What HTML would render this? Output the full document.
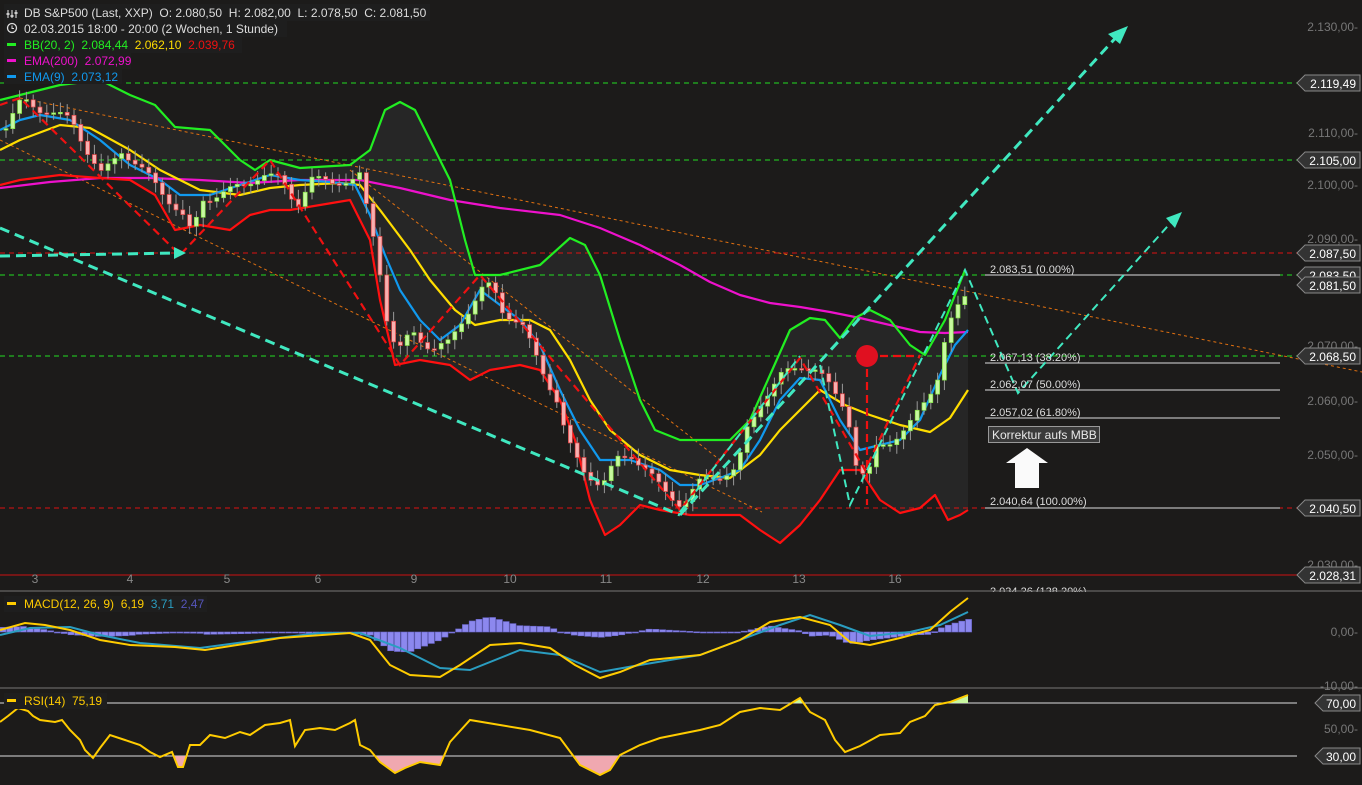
<!DOCTYPE html>
<html><head><meta charset="utf-8"><style>
body{margin:0;background:#1c1b1a;width:1362px;height:785px;overflow:hidden;font-family:"Liberation Sans",sans-serif}
svg{position:absolute;left:0;top:0}
.t{font-family:"Liberation Sans",sans-serif;font-size:12px}
text{white-space:pre}
</style></head><body>
<svg id="s" width="1362" height="785" xmlns="http://www.w3.org/2000/svg">
<rect width="1362" height="785" fill="#1c1b1a"/>
<polygon id="band" fill="#262626" points=""/>
<g stroke-width="1" fill="none">
<line x1="0" y1="83" x2="1297" y2="83" stroke="#22dd22" stroke-dasharray="5,4"/>
<line x1="0" y1="160" x2="1297" y2="160" stroke="#22dd22" stroke-dasharray="5,4"/>
<line x1="0" y1="253" x2="1297" y2="253" stroke="#dd1111" stroke-dasharray="5,4"/>
<line x1="0" y1="275" x2="1297" y2="275" stroke="#22dd22" stroke-dasharray="5,4"/>
<line x1="0" y1="356" x2="1297" y2="356" stroke="#22dd22" stroke-dasharray="5,4"/>
<line x1="0" y1="508" x2="1297" y2="508" stroke="#dd1111" stroke-dasharray="5,4"/>
<line x1="0" y1="575" x2="1297" y2="575" stroke="#cc1111"/>
<g stroke="#ddd"><line x1="985" y1="275" x2="1280" y2="275"/><line x1="985" y1="363" x2="1280" y2="363"/><line x1="985" y1="390" x2="1280" y2="390"/><line x1="985" y1="418" x2="1280" y2="418"/><line x1="985" y1="508" x2="1280" y2="508"/></g>
<g stroke="#e07010" stroke-dasharray="3,3">
<line x1="20" y1="98" x2="1362" y2="372"/>
<line x1="0" y1="140" x2="762" y2="512"/>
<line x1="350" y1="170" x2="720" y2="460"/>
</g>
</g>
<g id="lines" fill="none" stroke-width="2.2" stroke-linejoin="round"></g>
<g id="candles"></g>
<g fill="none" stroke="#ee1111" stroke-width="2.2" stroke-dasharray="8,5">
<polyline points="0,105 20,98 180,255 270,160 400,365 480,275 680,510 800,358 865,470 920,355"/>
<line x1="867" y1="356" x2="867" y2="505"/>
<line x1="867" y1="356" x2="920" y2="356"/>
</g>
<circle cx="867" cy="356" r="11" fill="#e01020"/>
<g fill="none" stroke="#40e8c0" stroke-width="3" stroke-dasharray="10,6">
<line x1="0" y1="228" x2="680" y2="515"/>
<line x1="680" y1="515" x2="1120" y2="33"/>
<line x1="0" y1="256" x2="178" y2="253"/>
</g>
<g fill="none" stroke="#40e8c0" stroke-width="2" stroke-dasharray="8,5">
<line x1="680" y1="512" x2="800" y2="356"/>
<polyline points="820,365 850,505 965,270 1018,393 1175,218"/>
</g>
<g fill="#40e8c0"><polygon points="1128,26 1108,34 1120,44"/><polygon points="1182,212 1166,218 1175,228"/><polygon points="186,253 174,247 174,259"/></g>
<polygon points="1027,448 1048,463 1039,463 1039,488 1015,488 1015,463 1006,463" fill="#fafafa"/>
<rect x="988.5" y="426.5" width="111" height="16" fill="#3a3a3a" stroke="#999"/>
<text x="992" y="439" class="t" fill="#e8e8e8">Korrektur aufs MBB</text>
<g class="t" fill="#ddd">
<text x="990" y="273" font-size="11">2.083,51 (0.00%)</text>
<text x="990" y="361" font-size="11">2.067,13 (38.20%)</text>
<text x="990" y="388" font-size="11">2.062,07 (50.00%)</text>
<text x="990" y="416" font-size="11">2.057,02 (61.80%)</text>
<text x="990" y="505" font-size="11">2.040,64 (100.00%)</text>
<text x="990" y="595" font-size="11">2.034,26 (138.20%)</text>
</g>
<rect x="0" y="592" width="1297" height="8" fill="#1c1b1a"/>
<line x1="0" y1="591" x2="1362" y2="591" stroke="#777"/>
<line x1="0" y1="688" x2="1362" y2="688" stroke="#777"/>
<g class="t" fill="#777" font-size="12" text-anchor="end">
<text x="1358" y="31">2.130,00-</text><text x="1358" y="137">2.110,00-</text><text x="1358" y="189">2.100,00-</text><text x="1358" y="243">2.090,00-</text><text x="1358" y="350">2.070,00-</text><text x="1358" y="405">2.060,00-</text><text x="1358" y="459">2.050,00-</text><text x="1358" y="569">2.030,00-</text>
<text x="1358" y="636">0,00-</text><text x="1358" y="690">-10,00-</text><text x="1358" y="733">50,00-</text>
</g>
<g id="lbl"></g>
<g class="t" fill="#888" font-size="12" text-anchor="middle">
<text x="35" y="583">3</text><text x="130" y="583">4</text><text x="227" y="583">5</text><text x="318" y="583">6</text><text x="414" y="583">9</text><text x="510" y="583">10</text><text x="606" y="583">11</text><text x="703" y="583">12</text><text x="799" y="583">13</text><text x="895" y="583">16</text>
</g>
<g id="hist"></g>
<g fill="none" stroke-width="2">
<polyline stroke="#2a9dc0" points="0,635 30,628 70,627 100,635 140,643 200,648 260,640 320,633 360,633 400,648 440,668 470,670 520,650 560,655 600,672 640,665 700,655 740,640 780,625 810,615 840,625 870,636 910,632 940,625 968,612"/>
<polyline stroke="#ffcc00" points="0,630 25,623 45,625 70,630 100,640 130,645 175,647 205,650 250,643 280,638 350,633 370,640 390,665 410,675 440,677 460,665 490,645 520,643 550,648 575,665 600,678 620,672 650,660 700,655 740,640 770,622 800,617 830,625 850,642 870,645 900,638 930,630 950,612 968,598"/>
</g>
<line x1="0" y1="703" x2="1297" y2="703" stroke="#ddd"/>
<line x1="0" y1="756" x2="1297" y2="756" stroke="#ddd"/>
<polygon id="rsifill" fill="#f0a8b0"/>
<g id="rsig"></g>
<polyline id="rsi" fill="none" stroke="#ffcc00" stroke-width="2"/>
<g fill="#1e1e1e">
<rect x="4" y="4" width="426" height="17"/><rect x="4" y="21" width="283" height="16"/><rect x="4" y="37" width="238" height="16"/><rect x="4" y="53" width="127" height="16"/><rect x="4" y="69" width="118" height="15"/>
<rect x="4" y="596" width="203" height="16"/><rect x="4" y="693" width="103" height="16"/>
</g>
<g class="t" font-size="12">
<g stroke="#ccc" stroke-width="1.2"><line x1="8" y1="10" x2="8" y2="18"/><line x1="12" y1="10" x2="12" y2="18"/><line x1="16" y1="10" x2="16" y2="18"/></g>
<g fill="#ccc"><rect x="6.5" y="13" width="3" height="2"/><rect x="10.5" y="15" width="3" height="2"/><rect x="14.5" y="12" width="3" height="2"/></g>
<text x="24" y="17" fill="#ddd">DB S&amp;P500 (Last, XXP)  O: 2.080,50  H: 2.082,00  L: 2.078,50  C: 2.081,50</text>
<circle cx="12" cy="28" r="4.5" fill="none" stroke="#ddd" stroke-width="1.3"/><path d="M12 25.5V28.5H14" stroke="#ddd" fill="none"/>
<text x="24" y="33" fill="#ddd">02.03.2015 18:00 - 20:00 (2 Wochen, 1 Stunde)</text>
<rect x="7" y="43" width="9" height="3" fill="#22ee22"/><text x="24" y="49" fill="#22ee22">BB(20, 2)  2.084,44  <tspan fill="#ffdd00">2.062,10</tspan>  <tspan fill="#ee1111">2.039,76</tspan></text>
<rect x="7" y="59" width="9" height="3" fill="#ee11cc"/><text x="24" y="65" fill="#ee11cc">EMA(200)  2.072,99</text>
<rect x="7" y="75" width="9" height="3" fill="#1199ee"/><text x="24" y="81" fill="#1199ee">EMA(9)  2.073,12</text>
<rect x="7" y="602" width="9" height="3" fill="#ffcc00"/><text x="24" y="608" fill="#ffcc00">MACD(12, 26, 9)  6,19  <tspan fill="#2a9dc0">3,71</tspan>  <tspan fill="#5555bb">2,47</tspan></text>
<rect x="7" y="699" width="9" height="3" fill="#ffcc00"/><text x="24" y="705" fill="#ffcc00">RSI(14)  75,19</text>
</g>
</svg>
<script>
const NS="http://www.w3.org/2000/svg";
function P(s){return s.trim().split(/\s+/).map(p=>p.split(',').map(Number));}
function interp(pts,x){for(let i=1;i<pts.length;i++){if(x<=pts[i][0]){const a=pts[i-1],b=pts[i];return a[1]+(b[1]-a[1])*(x-a[0])/(b[0]-a[0]);}}return pts[pts.length-1][1];}
function el(t,a,p){const e=document.createElementNS(NS,t);for(const k in a)e.setAttribute(k,a[k]);p.appendChild(e);return e;}
const green=P("0,100 20,95 60,85 100,80 130,95 155,105 175,127 210,130 240,160 255,170 270,160 300,168 350,165 370,150 385,110 400,102 415,110 430,140 450,180 465,240 475,275 500,275 540,265 570,238 585,245 600,275 620,340 640,400 655,430 680,440 730,440 750,420 770,375 790,330 810,318 825,320 840,338 855,318 870,310 890,320 910,345 925,355 945,320 965,270");
const red=P("0,185 20,180 60,175 100,178 130,180 155,195 175,230 200,225 230,230 250,215 270,210 290,210 320,205 350,200 370,240 380,300 395,365 420,360 450,365 470,380 490,370 520,365 540,370 560,400 575,440 590,500 605,535 620,525 640,505 660,510 690,515 710,515 740,515 760,530 780,543 800,525 820,500 840,470 860,470 880,500 900,513 920,508 935,495 948,520 960,515 968,510");
const yel=P("0,150 20,140 60,125 90,128 130,150 160,170 200,190 240,195 270,188 300,185 340,183 360,185 380,210 410,250 430,280 455,310 475,325 500,320 530,320 550,330 570,360 590,400 610,430 640,455 670,470 700,475 730,478 760,455 780,430 800,410 820,390 845,405 870,415 900,425 930,432 950,418 968,390");
const blue=P("0,130 20,120 40,115 70,120 100,140 130,165 160,180 180,195 210,195 240,185 270,175 300,180 330,182 355,185 370,215 385,255 400,290 420,320 440,340 460,325 480,290 500,305 520,320 540,345 560,390 580,430 600,460 630,460 660,470 680,485 700,485 720,478 740,470 760,440 780,400 800,378 820,380 840,420 860,450 880,445 900,440 920,420 940,375 955,345 968,330");
const mag=P("0,188 50,182 100,178 150,178 200,180 250,183 300,180 360,180 400,188 450,200 500,208 560,215 600,228 640,245 680,265 710,282 740,295 770,303 800,307 830,312 860,318 890,325 920,332 945,333 968,332");
const s=a=>a.map(p=>p.join(',')).join(' ');
document.getElementById('band').setAttribute('points',s(green)+' 968,270 968,512 '+s(red.slice().reverse()));
const L=document.getElementById('lines');
[[mag,'#ee11cc'],[red,'#ff1010'],[green,'#22ee22'],[yel,'#ffdd00'],[blue,'#1199ee']].forEach(([p,c])=>el('polyline',{points:s(p),stroke:c},L));
const close=P("5,125 20,100 40,110 70,120 90,160 100,175 120,150 150,180 180,215 190,235 200,200 230,190 260,175 280,180 295,205 310,180 350,182 360,175 365,210 375,250 385,320 395,355 410,330 430,350 445,345 460,320 480,290 490,285 500,310 520,325 540,370 555,400 565,440 580,470 600,485 615,460 630,455 645,470 660,490 680,505 700,480 720,475 735,470 745,430 760,400 780,375 800,365 815,370 830,390 845,410 855,470 865,480 875,445 890,440 905,430 920,405 935,380 945,330 960,300 968,290");
const C=document.getElementById('candles');let prev=interp(close,2);
for(let x=4;x<=966;x+=6.8){const c=interp(close,x)+Math.sin(x*1.7)*4;const o=prev;prev=c;const up=c<o;const top=Math.min(o,c),bot=Math.max(o,c);
el('line',{x1:x+2,x2:x+2,y1:top-4-Math.abs(Math.sin(x))*6,y2:bot+4+Math.abs(Math.cos(x))*6,stroke:'#999','stroke-width':1},C);
el('rect',{x:x,y:top,width:4,height:Math.max(bot-top,1.5),fill:up?'#c8f8a0':'#f8b0b0',stroke:up?'#80e040':'#e04040','stroke-width':0.7},C);}
const G=document.getElementById('lbl');
[[83,'2.119,49'],[160,'2.105,00'],[253,'2.087,50'],[275,'2.083,50'],[285,'2.081,50'],[356,'2.068,50'],[508,'2.040,50'],[575,'2.028,31']].forEach(([y,t])=>{
el('polygon',{points:`1297,${y} 1305,${y-8} 1360,${y-8} 1360,${y+8} 1305,${y+8}`,fill:'#333',stroke:'#888'},G);
const tx=el('text',{x:1356,y:y+5,'text-anchor':'end',fill:'#fff','font-size':12,'font-family':'Liberation Sans'},G);tx.textContent=t;});
[[703,'70,00'],[756,'30,00']].forEach(([y,t])=>{el('polygon',{points:`1315,${y} 1323,${y-8} 1360,${y-8} 1360,${y+8} 1323,${y+8}`,fill:'#333',stroke:'#888'},G);
const tx=el('text',{x:1356,y:y+5,'text-anchor':'end',fill:'#fff','font-size':12,'font-family':'Liberation Sans'},G);tx.textContent=t;});
const mac=P("0,630 25,623 45,625 70,630 100,640 130,645 175,647 205,650 250,643 280,638 350,633 370,640 390,665 410,675 440,677 460,665 490,645 520,643 550,648 575,665 600,678 620,672 650,660 700,655 740,640 770,622 800,617 830,625 850,642 870,645 900,638 930,630 950,612 968,598");
const sig=P("0,635 30,628 70,627 100,635 140,643 200,648 260,640 320,633 360,633 400,648 440,668 470,670 520,650 560,655 600,672 640,665 700,655 740,640 780,625 810,615 840,625 870,636 910,632 940,625 968,612");
const H=document.getElementById('hist');
for(let x=0;x<968;x+=6.8){const d=(interp(sig,x+3)-interp(mac,x+3))*0.9;const y0=632;const y=y0-d;
el('rect',{x:x,y:Math.min(y,y0),width:6,height:Math.max(Math.abs(d),1),fill:'#8c88ee',stroke:'#6a66cc','stroke-width':0.6},H);}
const rsi=P("0,722 8,716 18,708 28,711 33,716 40,720 55,722 62,720 70,730 80,740 85,750 93,758 100,748 110,735 125,740 140,745 150,752 160,757 172,752 178,767 183,767 190,745 200,745 210,735 225,738 240,732 250,735 265,725 280,723 290,720 295,746 305,730 320,728 335,730 350,723 355,720 360,745 370,750 380,762 395,773 405,768 420,762 440,765 450,742 470,720 500,725 530,730 560,738 580,765 600,775 610,770 620,755 640,745 660,738 700,730 720,725 740,712 760,708 780,710 800,698 810,712 825,720 835,740 845,752 860,746 880,735 900,733 910,722 925,716 935,705 950,702 968,695");
document.getElementById('rsi').setAttribute('points',s(rsi));
let f=[];for(let x=0;x<=968;x+=2){f.push(x+','+Math.max(756,interp(rsi,x)));}
document.getElementById('rsifill').setAttribute('points','0,756 '+f.join(' ')+' 968,756');
let f2=[];for(let x=0;x<=968;x+=2){f2.push(x+','+Math.min(703,interp(rsi,x)));}
el('polygon',{points:'0,703 '+f2.join(' ')+' 968,703',fill:'#c8f8a0'},document.getElementById('rsig'));
</script>
</body></html>
